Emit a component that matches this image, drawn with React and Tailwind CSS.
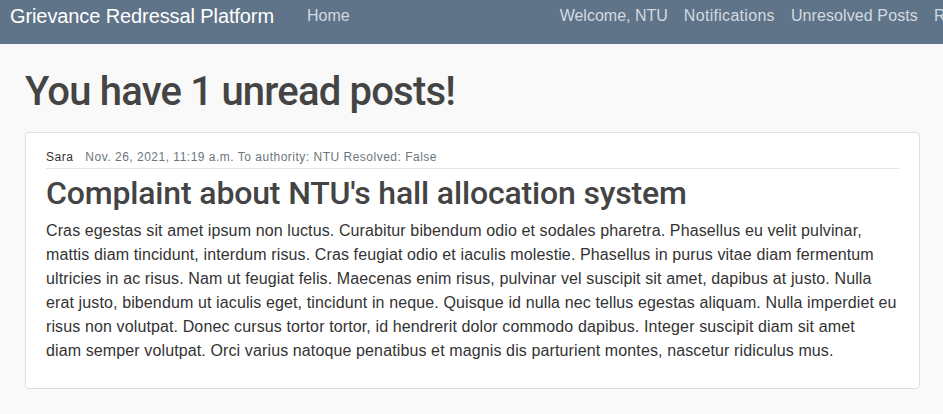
import React from "react";

const lines = [
  "Cras egestas sit amet ipsum non luctus. Curabitur bibendum odio et sodales pharetra. Phasellus eu velit pulvinar,",
  "mattis diam tincidunt, interdum risus. Cras feugiat odio et iaculis molestie. Phasellus in purus vitae diam fermentum",
  "ultricies in ac risus. Nam ut feugiat felis. Maecenas enim risus, pulvinar vel suscipit sit amet, dapibus at justo. Nulla",
  "erat justo, bibendum ut iaculis eget, tincidunt in neque. Quisque id nulla nec tellus egestas aliquam. Nulla imperdiet eu",
  "risus non volutpat. Donec cursus tortor tortor, id hendrerit dolor commodo dapibus. Integer suscipit diam sit amet",
  "diam semper volutpat. Orci varius natoque penatibus et magnis dis parturient montes, nascetur ridiculus mus.",
];

export default function App() {
  return (
    <div className="min-h-[414px] bg-[#f9f9f9] text-[#444] font-['Liberation_Sans',Arial,sans-serif]">
      <nav className="h-[44px] bg-[#5f7488] overflow-hidden">
        <div className="h-[32px] flex items-center whitespace-nowrap">
          <span className="ml-[10px] text-[20px] leading-[30px] tracking-[-0.1px] text-white">Grievance Redressal Platform</span>
          <span className="ml-[33px] text-[16px] leading-[24px] text-[#d3dae1]">Home</span>
          <div className="ml-[210px] flex gap-[16px] text-[16px] leading-[24px] text-[#d3dae1] shrink-0">
            <span>Welcome, NTU</span>
            <span className="tracking-[0.3px]">Notifications</span>
            <span className="tracking-[0.1px]">Unresolved Posts</span>
            <span>Resolved Posts</span>
          </div>
        </div>
      </nav>
      <main className="pl-[25px] pr-[23px] pt-[24px] pb-[24px]">
        <h1 className="font-['Roboto',sans-serif] text-[40px] leading-[48px] font-medium tracking-[-0.02em] text-[#444]">
          You have 1 unread posts!
        </h1>
        <div className="mt-[16px] bg-white border border-[#dedede] rounded-[4px] px-[20px] pt-[15px] pb-[25px]">
          <div className="flex gap-[12px] text-[12px] leading-[18px] tracking-[0.5px] pb-[2px] border-b border-[#e5e5e5]">
            <span className="text-[#333]">Sara</span>
            <span className="text-[#6c757d]">Nov. 26, 2021, 11:19 a.m. To authority: NTU Resolved: False</span>
          </div>
          <h2 className="mt-[5px] font-['Roboto',sans-serif] text-[32px] leading-[38px] font-medium tracking-[-0.005em] text-[#444]">
            Complaint about NTU's hall allocation system
          </h2>
          <p className="mt-[7px] text-[16px] leading-[24px] tracking-[0.12px] text-[#333]">
            {lines.map((l, i) => (
              <span key={i} className="block whitespace-nowrap">
                {l}
              </span>
            ))}
          </p>
        </div>
      </main>
    </div>
  );
}
